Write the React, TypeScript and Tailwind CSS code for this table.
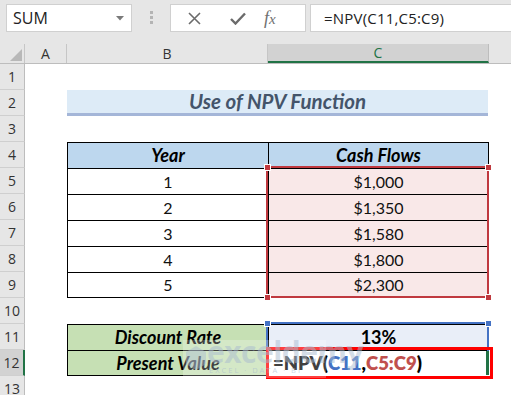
import React from 'react';

const rows = [1, 2, 3, 4, 5, 6, 7, 8, 9, 10, 11, 12, 13];
const cell = "font-['Lato','Liberation_Sans',sans-serif]";

function Handle({ x, y, color }: { x: number; y: number; color: string }) {
  return (
    <div
      className="absolute w-[7px] h-[7px] border border-white"
      style={{ left: x, top: y, backgroundColor: color }}
    />
  );
}

export default function App() {
  const data = [
    ['1', '$1,000'],
    ['2', '$1,350'],
    ['3', '$1,580'],
    ['4', '$1,800'],
    ['5', '$2,300'],
  ];
  return (
    <div className="relative w-[511px] h-[395px] overflow-hidden bg-white">
      {/* toolbar */}
      <div className="h-[44px] bg-[#e6e6e6] flex items-start pt-[4px] pl-[6px] font-['Open_Sans','Noto_Sans',sans-serif]">
        <div className="w-[126px] h-[28px] bg-white border border-[#d0d0d0] flex items-center justify-between pl-[6px] pr-[7px]">
          <span className="text-[16px] text-[#222] leading-none">SUM</span>
          <svg width="8" height="5" viewBox="0 0 8 5">
            <path d="M0 0 L8 0 L4 4.5 Z" fill="#7a7a7a" />
          </svg>
        </div>
        <div className="ml-[18px] mt-[7px] flex flex-col gap-[2px]">
          <div className="w-[3px] h-[3px] bg-[#b4b4b4]" />
          <div className="w-[3px] h-[3px] bg-[#b4b4b4]" />
          <div className="w-[3px] h-[3px] bg-[#b4b4b4]" />
        </div>
        <div className="ml-[17px] w-[136px] h-[28px] bg-white border border-[#d0d0d0] flex items-center">
          <svg className="ml-[17px]" width="13" height="13" viewBox="0 0 13 13">
            <path d="M1 1 L12 12 M12 1 L1 12" stroke="#6b6b6b" strokeWidth="1.6" />
          </svg>
          <svg className="ml-[29px]" width="16" height="13" viewBox="0 0 16 13">
            <path d="M1 7 L5.5 11.5 L15 1.5" stroke="#6b6b6b" strokeWidth="2.4" fill="none" />
          </svg>
          <span className="ml-[18px] font-['Liberation_Serif',serif] italic text-[18px] text-[#707070] leading-none">
            f<span className="text-[15px]">x</span>
          </span>
        </div>
        <div className="ml-[4px] flex-1 h-[28px] bg-white border border-r-0 border-[#d0d0d0] flex items-center pl-[13px]">
          <span className="text-[15px] text-[#222] leading-none tracking-[0.2px]">=NPV(C11,C5:C9)</span>
        </div>
      </div>

      {/* column headers */}
      <div className="h-[20px] flex bg-[#e6e6e6] border-b border-[#bdbdbd] text-[14px] text-[#333] font-['Open_Sans','Noto_Sans',sans-serif]">
        <div className="relative w-[25px] border-r border-[#c6c6c6]">
          <svg className="absolute left-[10px] top-[5px]" width="12" height="12" viewBox="0 0 12 12">
            <path d="M12 0 L12 12 L0 12 Z" fill="#b8b8b8" />
          </svg>
        </div>
        <div className="w-[42px] border-r border-[#c6c6c6] flex items-center justify-center">A</div>
        <div className="w-[201px] border-r border-[#c6c6c6] flex items-center justify-center">B</div>
        <div className="w-[221px] bg-[#d2d2d2] border-r border-[#bdbdbd] border-b-2 border-b-[#217346] flex items-center justify-center text-[#217346]">C</div>
        <div className="flex-1" />
      </div>

      {/* body */}
      <div className="flex">
        <div className="w-[25px] flex flex-col font-['Open_Sans','Noto_Sans',sans-serif] text-[14px] text-[#333]">
          {rows.map((r) => (
            <div
              key={r}
              className={
                'h-[26px] shrink-0 flex items-center justify-center border-b border-[#cfcfcf] ' +
                (r === 12
                  ? 'bg-[#d2d2d2] border-r-2 border-r-[#217346]'
                  : 'bg-[#e6e6e6] border-r border-r-[#bdbdbd]')
              }
            >
              {r}
            </div>
          ))}
        </div>

        <div className={'flex-1 flex flex-col pl-[42px] ' + cell}>
          <div className="h-[26px]" />
          {/* title */}
          <div className="h-[26px] w-[421px] bg-[#ddebf7] border-b-[3px] border-[#a4b6d8] flex items-center justify-center">
            <span className="text-[20.5px] font-bold italic text-[#44546a] leading-none">Use of NPV Function</span>
          </div>
          <div className="h-[26px]" />
          {/* table */}
          <div className="flex flex-col w-[422px]">
            <div className="flex h-[26px] bg-[#bdd7ee] text-[18px] font-bold italic text-black">
              <div className="w-[201px] border-t border-l border-black flex items-center justify-center">Year</div>
              <div className="w-[221px] border-t border-l border-r border-black flex items-center justify-center">Cash Flows</div>
            </div>
            {data.map(([y, v], i) => (
              <div key={y} className="flex h-[26px] text-[16px] text-[#111]">
                <div className={'w-[201px] border-t border-l border-black flex items-center justify-center bg-white ' + (i === 4 ? 'border-b' : '')}>{y}</div>
                <div className={'w-[221px] border-t border-l border-r border-black flex items-center justify-center bg-[#f9e8e8] ' + (i === 4 ? 'border-b' : '')}>{v}</div>
              </div>
            ))}
          </div>
          <div className="h-[26px]" />
          <div className="flex flex-col w-[422px] text-[18px] font-bold italic text-black">
            <div className="flex h-[26px]">
              <div className="w-[201px] bg-[#c6e0b4] border-t border-l border-black flex items-center justify-center">Discount Rate</div>
              <div className="w-[221px] bg-[#e9eef8] border-t border-l border-r border-black flex items-center justify-center not-italic">13%</div>
            </div>
            <div className="flex h-[26px]">
              <div className="w-[201px] bg-[#c6e0b4] border-t border-l border-b border-black flex items-center justify-center">Present Value</div>
              <div className="w-[221px] bg-white border-t border-l border-black flex items-center pl-[4px] not-italic text-[18.5px] font-extrabold">
                <span>=NPV(</span>
                <span className="text-[#4472c4]">C11</span>
                <span>,</span>
                <span className="text-[#c0504d]">C5:C9</span>
                <span>)</span>
              </div>
            </div>
          </div>
        </div>
      </div>

      {/* red reference selection C5:C9 */}
      <div className="absolute left-[266px] top-[166px] w-[223px] h-[132px] border-2 border-[#c0393f]" />
      <Handle x={264} y={164} color="#c0393f" />
      <Handle x={485} y={164} color="#c0393f" />
      <Handle x={264} y={294} color="#c0393f" />
      <Handle x={485} y={294} color="#c0393f" />

      {/* blue reference selection C11 */}
      <div className="absolute left-[266px] top-[322px] w-[223px] h-[29px] border-2 border-b-0 border-[#4472c4]" />
      <Handle x={264} y={320} color="#4472c4" />
      <Handle x={485} y={320} color="#4472c4" />

      {/* active cell edge */}
      <div className="absolute left-[486px] top-[351px] w-[3px] h-[24px] bg-[#217346]" />

      {/* annotation red box */}
      <div className="absolute left-[266px] top-[347px] w-[227px] h-[32px] border-[3px] border-[#ff0000]" />

      {/* watermark */}
      <div className="absolute left-[183px] top-[340px] w-[143px] h-[38px] bg-white/25 pointer-events-none">
        <svg className="absolute left-[2px] top-[5px]" width="22" height="26" viewBox="0 0 22 26">
          <path d="M11 1 L21 7 L21 19 L11 25 L1 19 L1 7 Z" fill="#a9bbd0" opacity="0.45" />
        </svg>
        <span className="absolute left-[24px] top-[-3px] text-[30px] font-bold text-[#a9bbd0]/50 font-['Open_Sans',sans-serif] leading-none tracking-[-0.5px]">exceldemy</span>
        <span className="absolute left-[26px] top-[27px] text-[7.5px] tracking-[2px] text-[#a9bbd0]/60 font-['Open_Sans',sans-serif] leading-none">EXCEL · DATA · BI</span>
      </div>
    </div>
  );
}
